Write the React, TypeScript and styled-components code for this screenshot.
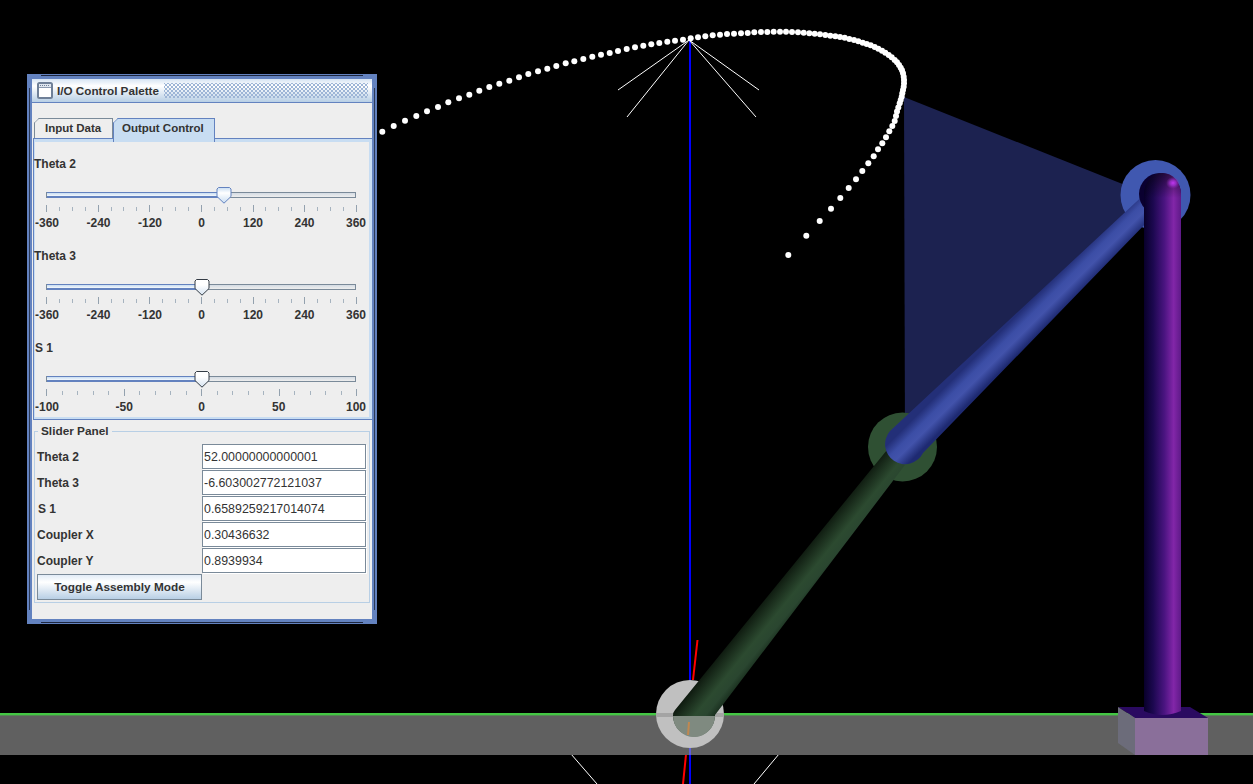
import React, { FunctionComponent } from 'react';
import styled, { createGlobalStyle } from 'styled-components';

const GlobalStyle = createGlobalStyle`
  html, body {
    margin: 0;
    padding: 0;
    background: #000000;
  }
`;

const uiFont = `'Liberation Sans', Arial, sans-serif`;
const textColor = '#333333';
const metalBlue = '#6382bf';
const metalGray = '#7a8a99';
const oceanLight = '#c8ddf2';
const oceanMid = '#b8cfe5';
const trackWidth = 310;

const Stage = styled.div`
  position: relative;
  width: 1253px;
  height: 784px;
  overflow: hidden;
  background: #000000;
  font-family: ${uiFont};
  color: ${textColor};
`;

const Scene = styled.svg`
  position: absolute;
  left: 0;
  top: 0;
`;

const Palette = styled.div`
  position: absolute;
  left: 27px;
  top: 74px;
  box-sizing: border-box;
  width: 350px;
  height: 550px;
  border: 5px solid ${metalBlue};
  background: #eeeeee;

  &::before,
  &::after {
    content: '';
    position: absolute;
    left: 9px;
    right: 9px;
    height: 1px;
    background: #1d2740;
  }

  &::before {
    top: -4px;
  }

  &::after {
    bottom: -4px;
  }
`;

const FrameEdges = styled.div`
  position: absolute;
  left: -3px;
  right: -3px;
  top: 9px;
  bottom: 9px;
  border-left: 1px solid #2c3a58;
  border-right: 1px solid #2c3a58;
  pointer-events: none;
`;

const TitleBar = styled.div`
  display: flex;
  align-items: center;
  gap: 4px;
  box-sizing: border-box;
  height: 24px;
  padding: 0 4px 1px 5px;
  border-bottom: 1px solid ${metalBlue};
  background: linear-gradient(#d6e4f3 0%, #ffffff 30%, ${oceanMid} 100%);
`;

const TitleText = styled.span`
  font-size: 11.7px;
  font-weight: bold;
  white-space: nowrap;
`;

const TitleBumps = styled.div`
  flex: 1;
  height: 15px;
  margin-left: 1px;
  background-image:
    radial-gradient(circle, #9db5d6 0.8px, transparent 1.1px),
    radial-gradient(circle, #9db5d6 0.8px, transparent 1.1px);
  background-size: 4px 4px;
  background-position: 0 0, 2px 2px;
`;

const TabStrip = styled.div`
  display: flex;
  height: 20px;
  margin: 15px 0 0 2px;
`;

const Tab = styled.div<{ $selected?: boolean; $width: number }>`
  position: relative;
  z-index: 1;
  box-sizing: border-box;
  width: ${(p) => p.$width}px;
  height: ${(p) => (p.$selected ? 24 : 20)}px;
  padding: 1px 0 0 ${(p) => (p.$selected ? 8 : 10)}px;
  border: 1px solid ${(p) => (p.$selected ? metalBlue : metalGray)};
  border-bottom: none;
  background: ${(p) => (p.$selected ? oceanLight : '#eeeeee')};
  clip-path: polygon(5px 0, 100% 0, 100% 100%, 0 100%, 0 5px);
  font-size: 11.5px;
  font-weight: bold;
  line-height: 16px;
  white-space: nowrap;

  &::before {
    content: '';
    position: absolute;
    left: -2px;
    top: 1px;
    width: 7px;
    height: 1px;
    background: ${(p) => (p.$selected ? metalBlue : metalGray)};
    transform: rotate(-45deg);
  }
`;

const TabPanel = styled.div`
  display: flex;
  flex-direction: column;
  gap: 14px;
  box-sizing: border-box;
  height: 282px;
  margin-left: 1px;
  padding: 13px 0 0 0;
  border-top: 1px solid ${metalBlue};
  border-left: 1px solid ${metalBlue};
  border-bottom: 1px solid ${metalBlue};
  box-shadow:
    inset 0 3px 0 ${oceanLight},
    inset -3px 0 0 ${oceanLight},
    inset 0 -2px 0 ${oceanLight},
    inset 1px 0 0 ${oceanLight};
`;

const SliderGroup = styled.div`
  display: flex;
  flex-direction: column;
  padding-top: 5px;
`;

const SliderLabel = styled.div<{ $indent?: number }>`
  height: 14px;
  padding-left: ${(p) => p.$indent ?? 0}px;
  font-size: 12px;
  font-weight: bold;
  line-height: 14px;
`;

const SliderBody = styled.div`
  position: relative;
  width: ${trackWidth}px;
  margin: 21px 0 0 12px;
`;

const Track = styled.div`
  box-sizing: border-box;
  height: 6px;
  border: 1px solid ${metalGray};
  background: linear-gradient(#d4dbe3, #eeeeee);
`;

const TrackFill = styled.div`
  box-sizing: border-box;
  min-height: 6px;
  margin: -1px 0;
  border-top: 1px solid ${metalBlue};
  border-bottom: 2px solid ${metalBlue};
  background: linear-gradient(${oceanLight}, #f4f8fc);
`;

const Thumb = styled.svg`
  position: absolute;
  top: -5px;
  transform: translateX(-50%);
`;

const Ticks = styled.div`
  display: flex;
  justify-content: space-between;
  align-items: center;
  height: 7px;
  margin: 7px -1px 0 0;
`;

const Tick = styled.div<{ $major: boolean }>`
  width: 1px;
  height: ${(p) => (p.$major ? 7 : 4)}px;
  background: ${(p) => (p.$major ? '#93a1ae' : '#a6b3bf')};
`;

const TickLabels = styled.div`
  display: flex;
  justify-content: space-between;
  margin: 4px 0 0 1px;
`;

const TickLabel = styled.div`
  display: flex;
  justify-content: center;
  width: 0;
  font-size: 12px;
  font-weight: bold;
  line-height: 14px;
  white-space: nowrap;
`;

const FieldGroup = styled.fieldset`
  box-sizing: border-box;
  width: 336px;
  min-width: 0;
  margin: 4px 0 0 2px;
  padding: 6px 2px 3px 2px;
  border: 1px solid ${oceanMid};
`;

const FieldLegend = styled.legend`
  margin-left: 1px;
  padding: 0 3px;
  font-size: 11.8px;
  font-weight: bold;
  line-height: 14px;
`;

const FieldGrid = styled.div`
  display: grid;
  grid-template-columns: 165px 164px;
  grid-auto-rows: 25px;
  row-gap: 1px;
`;

const FieldLabel = styled.label<{ $indent?: number }>`
  padding-left: ${(p) => p.$indent ?? 0}px;
  font-size: 12px;
  font-weight: bold;
  line-height: 27px;
`;

const FieldInput = styled.input`
  box-sizing: border-box;
  width: 164px;
  height: 25px;
  padding: 1px 0 0 1px;
  border: 1px solid ${metalGray};
  border-radius: 0;
  outline: none;
  background: #ffffff;
  box-shadow: 1px 1px 0 #ffffff;
  color: ${textColor};
  font-family: ${uiFont};
  font-size: 12.4px;
`;

const ToggleButton = styled.button`
  box-sizing: border-box;
  width: 165px;
  height: 26px;
  padding: 0;
  border: 1px solid ${metalGray};
  border-radius: 0;
  background: linear-gradient(#e2ecf7 0%, #ffffff 30%, ${oceanMid} 100%);
  color: ${textColor};
  font-family: ${uiFont};
  font-size: 11.8px;
  font-weight: bold;
`;

const WindowIcon: FunctionComponent = () => (
  <svg width="16" height="17" viewBox="0 0 16 17">
    <rect x="1" y="1" width="14" height="15" rx="1.5" fill="#ffffff" stroke="#6f8098" strokeWidth="2" />
    <rect x="2" y="2" width="12" height="3" fill="#dfe6ef" />
    <path d="M3 3.5h1M5 3.5h1M7 3.5h1M9 3.5h1M11 3.5h1" stroke="#6f8098" strokeWidth="1" />
    <path d="M2 5.5h12" stroke="#8b9ab0" strokeWidth="1" />
  </svg>
);

interface SliderProps {
  label: string;
  labelIndent?: number;
  min: number;
  max: number;
  value: number;
  tickCount: number;
  majorEvery: number;
  labels: string[];
  active?: boolean;
}

const Slider: FunctionComponent<SliderProps> = ({
  label,
  labelIndent,
  min,
  max,
  value,
  tickCount,
  majorEvery,
  labels,
  active,
}) => {
  const percent = ((value - min) / (max - min)) * 100;
  const id = label.replace(' ', '');

  return (
    <SliderGroup>
      <SliderLabel $indent={labelIndent}>{label}</SliderLabel>
      <SliderBody>
        <Track>
          <TrackFill style={{ width: `${percent}%` }} />
        </Track>
        <Thumb
          width="16"
          height="17"
          viewBox="0 0 16 17"
          style={{ left: `calc(${percent}% + 1px)` }}
        >
          <defs>
            <linearGradient id={`thumb${id}`} x1="0" y1="0" x2="0" y2="1">
              <stop offset="0" stopColor={active ? '#c8ddf2' : '#ffffff'} />
              <stop offset="0.35" stopColor="#ffffff" />
              <stop offset="1" stopColor={active ? '#c8ddf2' : '#d5e2f0'} />
            </linearGradient>
          </defs>
          <path
            d="M2.5 .5H13.5L15 2V9.5L8 16.2L1 9.5V2Z"
            fill={`url(#thumb${id})`}
            stroke={active ? '#6382bf' : '#333b44'}
            strokeWidth="1"
          />
        </Thumb>
        <Ticks>
          {Array.from({ length: tickCount }, (_, i) => (
            <Tick key={i} $major={i % majorEvery === 0} />
          ))}
        </Ticks>
        <TickLabels>
          {labels.map((text) => (
            <TickLabel key={text}>{text}</TickLabel>
          ))}
        </TickLabels>
      </SliderBody>
    </SliderGroup>
  );
};

const couplerDots: [number, number][] = [
  [382.3, 131.7], [393.7, 126], [405, 120.7], [416.3, 116], [427, 111.3], [438, 107],
  [448.3, 102.3], [459, 98.3], [469.3, 94.7], [479.3, 90.7], [489.3, 87], [499.3, 83.7],
  [509.3, 80.7], [519, 77.3], [528.3, 74], [538, 71.3], [547.3, 68.7], [556.3, 66],
  [565.7, 63.3], [574.3, 61.3], [583.3, 59], [592.3, 56.7], [601, 54.7], [609.7, 53],
  [618, 51], [626.7, 49], [635, 47.3], [643.3, 45.7], [651.3, 44.3], [659.3, 43],
  [667.3, 41.7], [675, 40.7], [683, 39.7], [690.7, 38.3], [698, 37.3], [705.3, 36.3],
  [712.7, 35.3], [720, 34.7], [727, 34], [734, 33.7], [741, 33.3], [747.7, 33],
  [754.3, 32.3], [761, 32], [767.3, 32], [773.7, 31.7], [780, 31.7], [786, 31.7],
  [792, 32], [798, 32.3], [803.7, 32.7], [809.3, 33.3], [814.7, 33.7], [820, 34.3],
  [825.3, 35], [830.3, 35.7], [835.3, 36.3], [840, 37], [844.7, 37.7], [849.3, 39],
  [854, 40], [858.3, 41.3], [862.7, 42.7], [866.7, 44], [870.7, 45.3], [874.7, 47],
  [878.3, 48.7], [882, 50.7], [885.3, 52.7], [888.7, 55], [891.7, 57.3], [894.7, 60],
  [897, 62.3], [899, 65], [900.7, 67.7], [902, 70.3], [903, 73.3], [903.7, 76.7],
  [904, 80], [904, 83.3], [903.7, 86.7], [903, 90], [902.3, 93.3], [901.7, 96.7],
  [900.7, 100], [899.7, 103.3], [898.3, 107.5], [897, 111.5], [896, 116], [894.7, 121],
  [892.3, 126], [889.3, 131.3], [886, 137.3], [882.3, 143.3], [878, 149.3], [873.7, 156.3],
  [868.3, 163.3], [862.3, 171], [856, 179.3], [848.7, 188], [840.3, 198], [831, 208.7],
  [819.7, 221], [806.3, 235.7], [788.3, 255],
];

const MechanismScene: FunctionComponent = () => (
  <Scene width="1253" height="784" viewBox="0 0 1253 784">
    <defs>
      <linearGradient id="greenLink" gradientUnits="userSpaceOnUse" x1="732" y1="640" x2="758" y2="661">
        <stop offset="0" stopColor="#0f1b10" />
        <stop offset="0.55" stopColor="#2c4a30" />
        <stop offset="0.8" stopColor="#2a4630" />
        <stop offset="1" stopColor="#1b3120" />
      </linearGradient>
      <linearGradient id="blueLink" gradientUnits="userSpaceOnUse" x1="1000" y1="332" x2="1020" y2="352">
        <stop offset="0" stopColor="#232f78" />
        <stop offset="0.35" stopColor="#3c4ea6" />
        <stop offset="0.6" stopColor="#4253ab" />
        <stop offset="1" stopColor="#1e2a72" />
      </linearGradient>
      <linearGradient id="purpleColumn" x1="0" y1="0" x2="1" y2="0">
        <stop offset="0" stopColor="#08002a" />
        <stop offset="0.25" stopColor="#1c0850" />
        <stop offset="0.55" stopColor="#4a1480" />
        <stop offset="0.8" stopColor="#8226a8" />
        <stop offset="1" stopColor="#5e1a88" />
      </linearGradient>
      <linearGradient id="domeShade" gradientUnits="userSpaceOnUse" x1="0" y1="173" x2="0" y2="198">
        <stop offset="0" stopColor="#000000" stopOpacity="0.55" />
        <stop offset="1" stopColor="#000000" stopOpacity="0" />
      </linearGradient>
      <radialGradient id="domeGlint">
        <stop offset="0" stopColor="#c038f0" />
        <stop offset="0.45" stopColor="#a02ed0" stopOpacity="0.8" />
        <stop offset="1" stopColor="#8226a8" stopOpacity="0" />
      </radialGradient>
    </defs>

    <polygon points="904,97 1130,187 1130,215 905,445" fill="#1c2250" />

    <rect x="689" y="40" width="2" height="744" fill="#0000ff" />
    <path d="M697.5 640L693 680" stroke="#ff0000" strokeWidth="2" fill="none" />
    <path d="M688 735L683 784" stroke="#ff0000" strokeWidth="2" fill="none" />

    <g stroke="#ffffff" strokeWidth="1" fill="none">
      <path d="M689 40L618 90M689 40L627 117M689 40L759 90M689 40L756 117" />
      <path d="M571 754L597 784M779 754L754 784" />
    </g>

    {couplerDots.map(([cx, cy]) => (
      <circle key={`${cx}-${cy}`} cx={cx} cy={cy} r="3" fill="#ffffff" />
    ))}

    <rect x="0" y="715" width="1253" height="40" fill="#606060" />
    <rect x="0" y="713" width="1253" height="2.4" fill="#44c744" />
    <rect x="689" y="748" width="2" height="7" fill="#6060d8" />

    <circle cx="690" cy="714" r="34" fill="#c0c0c0" />
    <rect x="656" y="713" width="68" height="4" fill="#a4a4a4" />

    <circle cx="902.5" cy="447" r="34.5" fill="#2f5033" />
    <circle cx="1155.5" cy="195" r="35" fill="#4058b0" />

    <path
      d="M887 450L905 465L715 715A21 21 0 0 1 673 716Q673 712 675 710Z"
      fill="url(#greenLink)"
    />
    <path d="M673 716A21 21 0 0 0 715 716Z" fill="#7f8a80" />
    <path d="M689 722L688 735" stroke="#c08850" strokeWidth="2" fill="none" />

    <path
      d="M890 431L1150 189V219L923 453A20 20 0 1 1 890 431Z"
      fill="url(#blueLink)"
    />

    <polygon points="1118,707 1190,707 1208,718 1135,718" fill="#2a0a60" />
    <polygon points="1118,707 1135,718 1135,755 1118,743" fill="#6c6c7a" />
    <rect x="1135" y="718" width="73" height="37" fill="#8a6f9a" />

    <circle cx="1160" cy="194" r="21" fill="#0a0030" />
    <path
      d="M1144 194A18.5 21 0 0 1 1181 194V711Q1162 719 1144 711Z"
      fill="url(#purpleColumn)"
    />
    <path d="M1144 198V194A18.5 21 0 0 1 1181 194V198Z" fill="url(#domeShade)" />
    <ellipse cx="1173" cy="183" rx="7" ry="6" fill="url(#domeGlint)" />
  </Scene>
);

const fieldRows = [
  { label: 'Theta 2', value: '52.00000000000001' },
  { label: 'Theta 3', value: '-6.603002772121037' },
  { label: 'S 1', value: '0.6589259217014074', indent: 1 },
  { label: 'Coupler X', value: '0.30436632' },
  { label: 'Coupler Y', value: '0.8939934' },
];

const angleLabels = ['-360', '-240', '-120', '0', '120', '240', '360'];

const App: FunctionComponent = () => (
  <Stage>
    <GlobalStyle />
    <MechanismScene />
    <Palette>
      <FrameEdges />
      <TitleBar>
        <WindowIcon />
        <TitleText>I/O Control Palette</TitleText>
        <TitleBumps />
      </TitleBar>
      <TabStrip>
        <Tab $width={79}>Input Data</Tab>
        <Tab $width={102} $selected>
          Output Control
        </Tab>
      </TabStrip>
      <TabPanel>
        <Slider
          label="Theta 2"
          min={-360}
          max={360}
          value={52}
          tickCount={25}
          majorEvery={4}
          labels={angleLabels}
          active
        />
        <Slider
          label="Theta 3"
          min={-360}
          max={360}
          value={0}
          tickCount={25}
          majorEvery={4}
          labels={angleLabels}
        />
        <Slider
          label="S 1"
          labelIndent={1}
          min={-100}
          max={100}
          value={0}
          tickCount={21}
          majorEvery={5}
          labels={['-100', '-50', '0', '50', '100']}
        />
      </TabPanel>
      <FieldGroup>
        <FieldLegend>Slider Panel</FieldLegend>
        <FieldGrid>
          {fieldRows.map((row) => (
            <React.Fragment key={row.label}>
              <FieldLabel $indent={row.indent}>{row.label}</FieldLabel>
              <FieldInput readOnly value={row.value} />
            </React.Fragment>
          ))}
          <ToggleButton type="button">Toggle Assembly Mode</ToggleButton>
        </FieldGrid>
      </FieldGroup>
    </Palette>
  </Stage>
);

export default App;
